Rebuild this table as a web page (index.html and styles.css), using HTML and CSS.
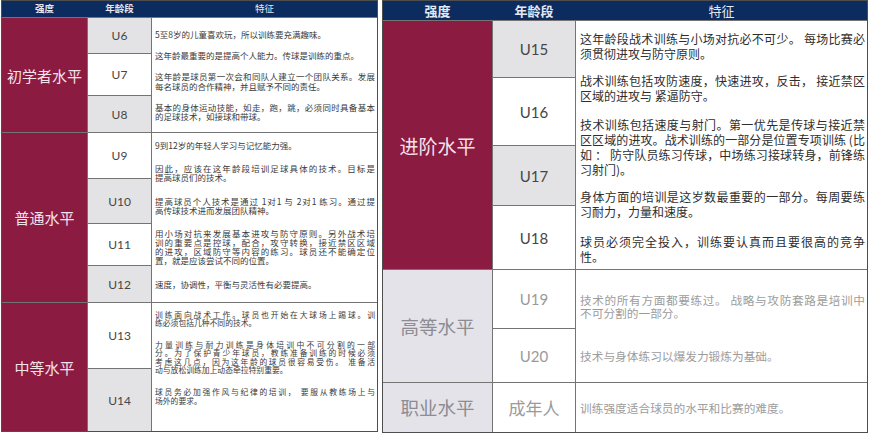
FILE: index.html
```html
<!DOCTYPE html>
<html lang="zh">
<head>
<meta charset="utf-8">
<title>青少年足球训练阶段</title>
<link rel="stylesheet" href="styles.css">
</head>
<body>
<div class="page">
  <div class="tbl tbl-left">
    <div class="head">
      <div class="hc hc-b">强度</div>
      <div class="hc hc-b">年龄段</div>
      <div class="hc">特征</div>
    </div>

    <div class="lvl span3">初学者水平</div>
    <div class="age alt">U6</div>
    <div class="txt span3 g1">
      <p>5至8岁的儿童喜欢玩，所以训练要充满趣味。</p>
      <p>这年龄最重要的是提高个人能力。传球是训练的重点。</p>
      <p><span class="j">这年龄是球员第一次会和同队人建立一个团队关系。发展</span>每名球员的合作精神，并且赋予不同的责任。</p>
      <p><span class="j">基本的身体运动技能，如走，跑，跳，必须同时具备基本</span>的足球技术，如接球和带球。</p>
    </div>
    <div class="age">U7</div>
    <div class="age alt">U8</div>

    <div class="lvl span4">普通水平</div>
    <div class="age">U9</div>
    <div class="txt span4 g2">
      <p>9到12岁的年轻人学习与记忆能力强。</p>
      <p><span class="j">因此，应该在这年龄段培训足球具体的技术。目标是</span>提高球员们的技术。</p>
      <p><span class="j">提高球员个人技术是通过 1对1 与 2对1 练习。通过提</span>高传球技术进而发展团队精神。</p>
      <p><span class="j">用小场对抗来发展基本进攻与防守原则。另外战术培</span><span class="j">训的重要点是控球，配合，攻守转换，接近禁区区域</span><span class="j">的进攻，区域防守等内容的练习。球员还不能确定位</span>置，就是应该尝试不同的位置。</p>
      <p>速度，协调性，平衡与灵活性有必要提高。</p>
    </div>
    <div class="age alt">U10</div>
    <div class="age">U11</div>
    <div class="age alt">U12</div>

    <div class="lvl span2">中等水平</div>
    <div class="age">U13</div>
    <div class="txt span2 g3">
      <p><span class="j">训练面向战术工作。球员也开始在大球场上踢球。训</span>练必须包括几种不同的技术。</p>
      <p><span class="j">力量训练与耐力训练是身体培训中不可分割的一部</span><span class="j">分。为了保护青少年球员，教练准备训练的时候必须</span><span class="j">考虑这几点，因为这年龄的球员很容易受伤。 准备活</span>动与放松训练加上动态牵拉特别重要。</p>
      <p><span class="j">球员务必加强作风与纪律的培训， 要服从教练场上与</span>场外的要求。</p>
    </div>
    <div class="age alt">U14</div>
  </div>

  <div class="tbl tbl-right">
    <div class="head">
      <div class="hc hc-b">强度</div>
      <div class="hc hc-b">年龄段</div>
      <div class="hc">特征</div>
    </div>

    <div class="lvl span4">进阶水平</div>
    <div class="age alt">U15</div>
    <div class="txt span4 r1">
      <p><span class="j">这年龄段战术训练与小场对抗必不可少。 每场比赛必</span>须贯彻进攻与防守原则。</p>
      <p><span class="j">战术训练包括攻防速度，快速进攻，反击， 接近禁区</span>区域的进攻与 紧逼防守。</p>
      <p><span class="j">技术训练包括速度与射门。第一优先是传球与接近禁</span><span class="j">区区域的进攻。战术训练的一部分是位置专项训练 (比</span><span class="j">如 ： 防守队员练习传球，中场练习接球转身，前锋练</span>习射门)。</p>
      <p><span class="j">身体方面的培训是这岁数最重要的一部分。每周要练</span>习耐力，力量和速度。</p>
      <p><span class="j">球员必须完全投入，训练要认真而且要很高的竞争</span>性。</p>
    </div>
    <div class="age">U16</div>
    <div class="age alt">U17</div>
    <div class="age">U18</div>

    <div class="lvl lvl-gray span2">高等水平</div>
    <div class="age muted">U19</div>
    <div class="txt span2 r2">
      <p><span class="j">技术的所有方面都要练过。 战略与攻防套路是培训中</span>不可分割的一部分。</p>
      <p>技术与身体练习以爆发力锻炼为基础。</p>
    </div>
    <div class="age muted">U20</div>

    <div class="lvl lvl-gray">职业水平</div>
    <div class="age muted cjk">成年人</div>
    <div class="txt r3">
      <p>训练强度适合球员的水平和比赛的难度。</p>
    </div>
  </div>
</div>
</body>
</html>
```

FILE: styles.css
```css
* { box-sizing: border-box; }

body {
  margin: 0;
  background: #ffffff;
  font-family: "Noto Sans CJK SC", "Noto Sans", sans-serif;
}

.page {
  display: flex;
  align-items: flex-start;
  gap: 4px;
  padding-left: 1px;
}

.tbl {
  display: grid;
  gap: 1px;
  background: #747474;
  border: 1px solid #4e4e4e;
}

.tbl-left {
  grid-template-columns: 85px 63px 225px;
  grid-template-rows: 16px 35px 41px 36px 45px 44px 41px 36px 65px 62px;
}

.tbl-right {
  grid-template-columns: 109px 82px 291px;
  grid-template-rows: 19px 56px 67px 59px 63px 58px 53px 49px;
}

.head {
  grid-column: 1 / -1;
  display: grid;
  gap: 1px;
  background: #0c2b5e;
  color: #e4e9f2;
}

.tbl-left .head {
  grid-template-columns: 85px 63px 225px;
  font-size: 9.5px;
}

.tbl-right .head {
  grid-template-columns: 109px 82px 291px;
  font-size: 13px;
}

.hc {
  display: flex;
  align-items: center;
  justify-content: center;
  line-height: 1;
}

.hc-b { font-weight: 700; }

.span2 { grid-row: span 2; }
.span3 { grid-row: span 3; }
.span4 { grid-row: span 4; }

.lvl {
  grid-column: 1;
  display: flex;
  align-items: center;
  justify-content: center;
  background: #8c1b42;
  color: #f3e2e8;
  font-size: 15px;
  line-height: 1;
}

.tbl-right .lvl { font-size: 19px; }

.tbl-right .lvl-gray {
  background: #e3e3e9;
  color: #8c8c92;
  font-size: 18.5px;
}

.age {
  grid-column: 2;
  display: flex;
  align-items: center;
  justify-content: center;
  background: #ffffff;
  color: #464646;
  font-family: Lato, "Noto Sans", sans-serif;
  font-size: 12px;
}

.age.alt { background: #e3e3e5; }

.tbl-right .age { font-size: 15px; }
.tbl-right .age.muted { color: #9a9a9a; }
.tbl-right .age.cjk {
  font-family: "Noto Sans CJK SC", sans-serif;
  font-size: 17px;
}

.txt {
  grid-column: 3;
  background: #ffffff;
}

.txt p { margin: 0; }

.j {
  display: block;
  white-space: nowrap;
  text-align: justify;
  text-align-last: justify;
}

/* left table text */
.tbl-left .txt {
  color: #3a3a3a;
  padding: 0 2px 0 3px;
}

.tbl-left .g1 {
  padding-top: 12px;
  font-size: 8.5px;
  line-height: 9.5px;
}
.g1 p + p { margin-top: 11.5px; }

.tbl-left .g2 {
  padding-top: 7.5px;
  font-size: 8.5px;
  line-height: 9px;
}
.g2 p + p { margin-top: 14.5px; }

.tbl-left .g3 {
  padding-top: 7.5px;
  font-size: 7.8px;
  line-height: 8.3px;
}
.g3 p + p { margin-top: 14px; }

/* right table text */
.tbl-right .txt {
  padding: 0 2px 0 4px;
}

.tbl-right .r1 {
  padding-top: 9.5px;
  font-size: 12px;
  line-height: 15px;
  color: #2e2e2e;
}
.r1 p:nth-child(2) { margin-top: 12px; }
.r1 p:nth-child(3) { margin-top: 14px; }
.r1 p:nth-child(4) { margin-top: 12px; }
.r1 p:nth-child(5) { margin-top: 15px; }

.r2, .r3 {
  font-size: 11.7px;
  line-height: 13px;
  color: #9c9c9c;
}

.tbl-right .r2 { padding-top: 22.5px; }
.r2 p + p { margin-top: 30px; }

.r3 {
  display: flex;
  align-items: center;
}
```
